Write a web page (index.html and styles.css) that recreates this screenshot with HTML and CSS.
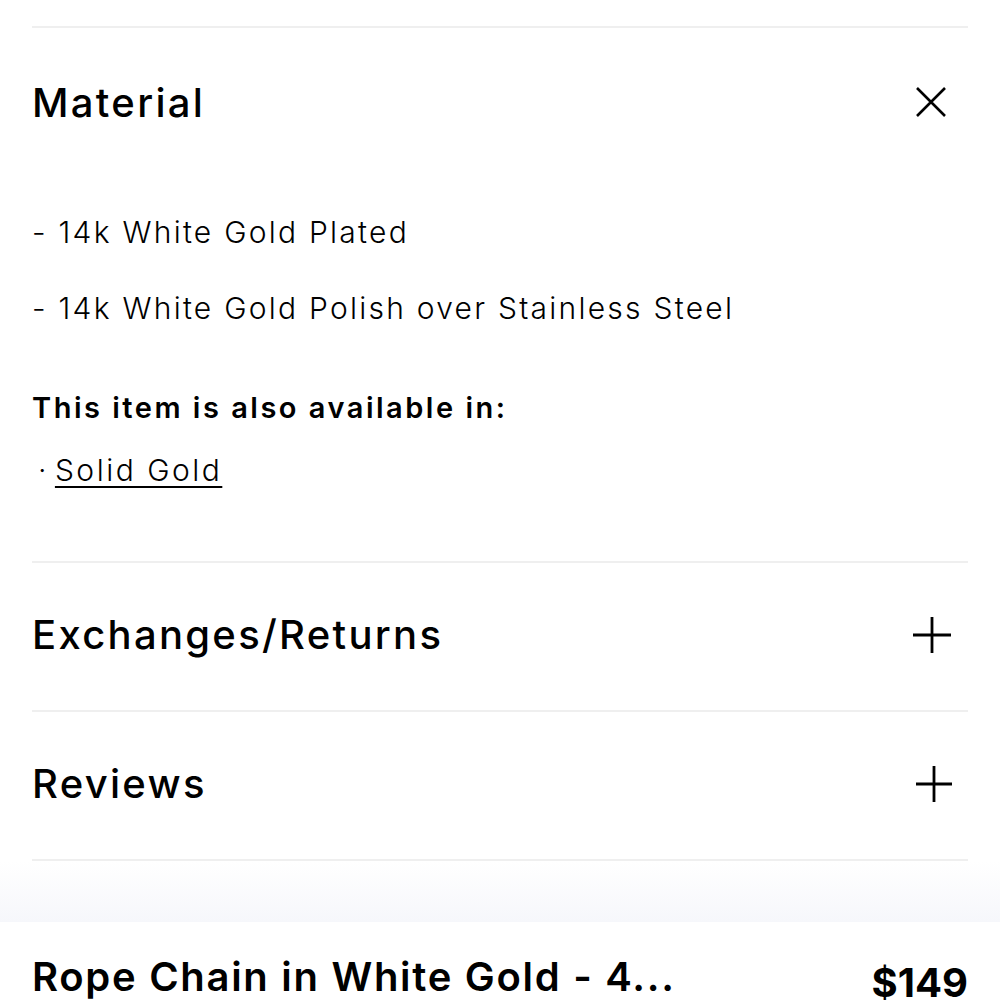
FILE: index.html
```html
<!DOCTYPE html>
<html>
<head>
<meta charset="utf-8">
<link rel="stylesheet" href="styles.css">
</head>
<body>
<div class="page">
  <div class="accordion">
    <section class="item open">
      <div class="head">
        <h2 class="title">Material</h2>
        <svg class="icon icon-x" width="40" height="40" viewBox="0 0 40 40"><path d="M6 6 L34 34 M34 6 L6 34" stroke="#000" stroke-width="2.6" fill="none"/></svg>
      </div>
      <div class="body">
        <p class="line">- 14k White Gold Plated</p>
        <p class="line">- 14k White Gold Polish over Stainless Steel</p>
        <p class="also">This item is also available in:</p>
        <p class="link-row"><span class="dot">·</span> <a class="link" href="#">Solid Gold</a></p>
      </div>
    </section>
    <section class="item">
      <div class="head">
        <h2 class="title">Exchanges/Returns</h2>
        <svg class="icon icon-p1" width="40" height="40" viewBox="0 0 40 40"><path d="M1 20 H39 M20 2 V38" stroke="#000" stroke-width="2.8" fill="none"/></svg>
      </div>
    </section>
    <section class="item">
      <div class="head">
        <h2 class="title">Reviews</h2>
        <svg class="icon icon-p2" width="40" height="40" viewBox="0 0 40 40"><path d="M2 20 H38 M20 2 V38" stroke="#000" stroke-width="2.8" fill="none"/></svg>
      </div>
    </section>
  </div>
  <div class="sticky">
    <div class="product">Rope Chain in White Gold - 4...</div>
    <div class="price">$149</div>
  </div>
</div>
</body>
</html>
```
FILE: styles.css
```css
html, body {
  margin: 0;
  padding: 0;
  background: #fff;
}
body {
  font-family: Inter, "Liberation Sans", sans-serif;
  color: #000;
  overflow: hidden;
  height: 1000px;
}
.page {
  display: flex;
  flex-direction: column;
}
.accordion {
  margin: 0 32px;
  padding-top: 26px;
}
.item {
  border-top: 2px solid #efefef;
}
.item:last-child {
  border-bottom: 2px solid #efefef;
}
.head {
  height: 147px;
  display: flex;
  align-items: center;
  justify-content: space-between;
  box-sizing: border-box;
  padding-bottom: 4px;
}
.item.open .head {
  height: 148px;
  padding-bottom: 0;
}
.title {
  margin: 0;
  font-size: 40px;
  font-weight: 500;
  letter-spacing: 2.3px;
}
.icon-x {
  margin-right: 17px;
}
.icon-p1 {
  margin-right: 16px;
}
.icon-p2 {
  margin-right: 14px;
}
.body {
  padding-top: 37px;
  padding-bottom: 72px;
}
.line {
  margin: 0 0 38px;
  font-size: 30px;
  font-weight: 300;
  line-height: 38px;
  letter-spacing: 2.25px;
}
.line + .line {
  margin-bottom: 62px;
}
.also {
  margin: 0 0 24px;
  font-size: 29px;
  font-weight: 600;
  line-height: 38px;
  letter-spacing: 2.5px;
}
.link-row {
  margin: 0;
  font-size: 30px;
  font-weight: 300;
  line-height: 38px;
  padding-left: 6px;
}
.link {
  color: #000;
  letter-spacing: 2.5px;
  text-decoration: underline;
  text-underline-offset: 5px;
  text-decoration-thickness: 2px;
}
.sticky {
  background: linear-gradient(#fff 0, #f6f7fb 61px, #fff 61px);
  padding: 91px 32px 0;
  display: flex;
  justify-content: space-between;
  align-items: flex-start;
}
.product {
  font-size: 40px;
  font-weight: 600;
  letter-spacing: 1.7px;
}
.price {
  font-size: 40px;
  font-weight: 700;
  padding-top: 6px;
}
```
